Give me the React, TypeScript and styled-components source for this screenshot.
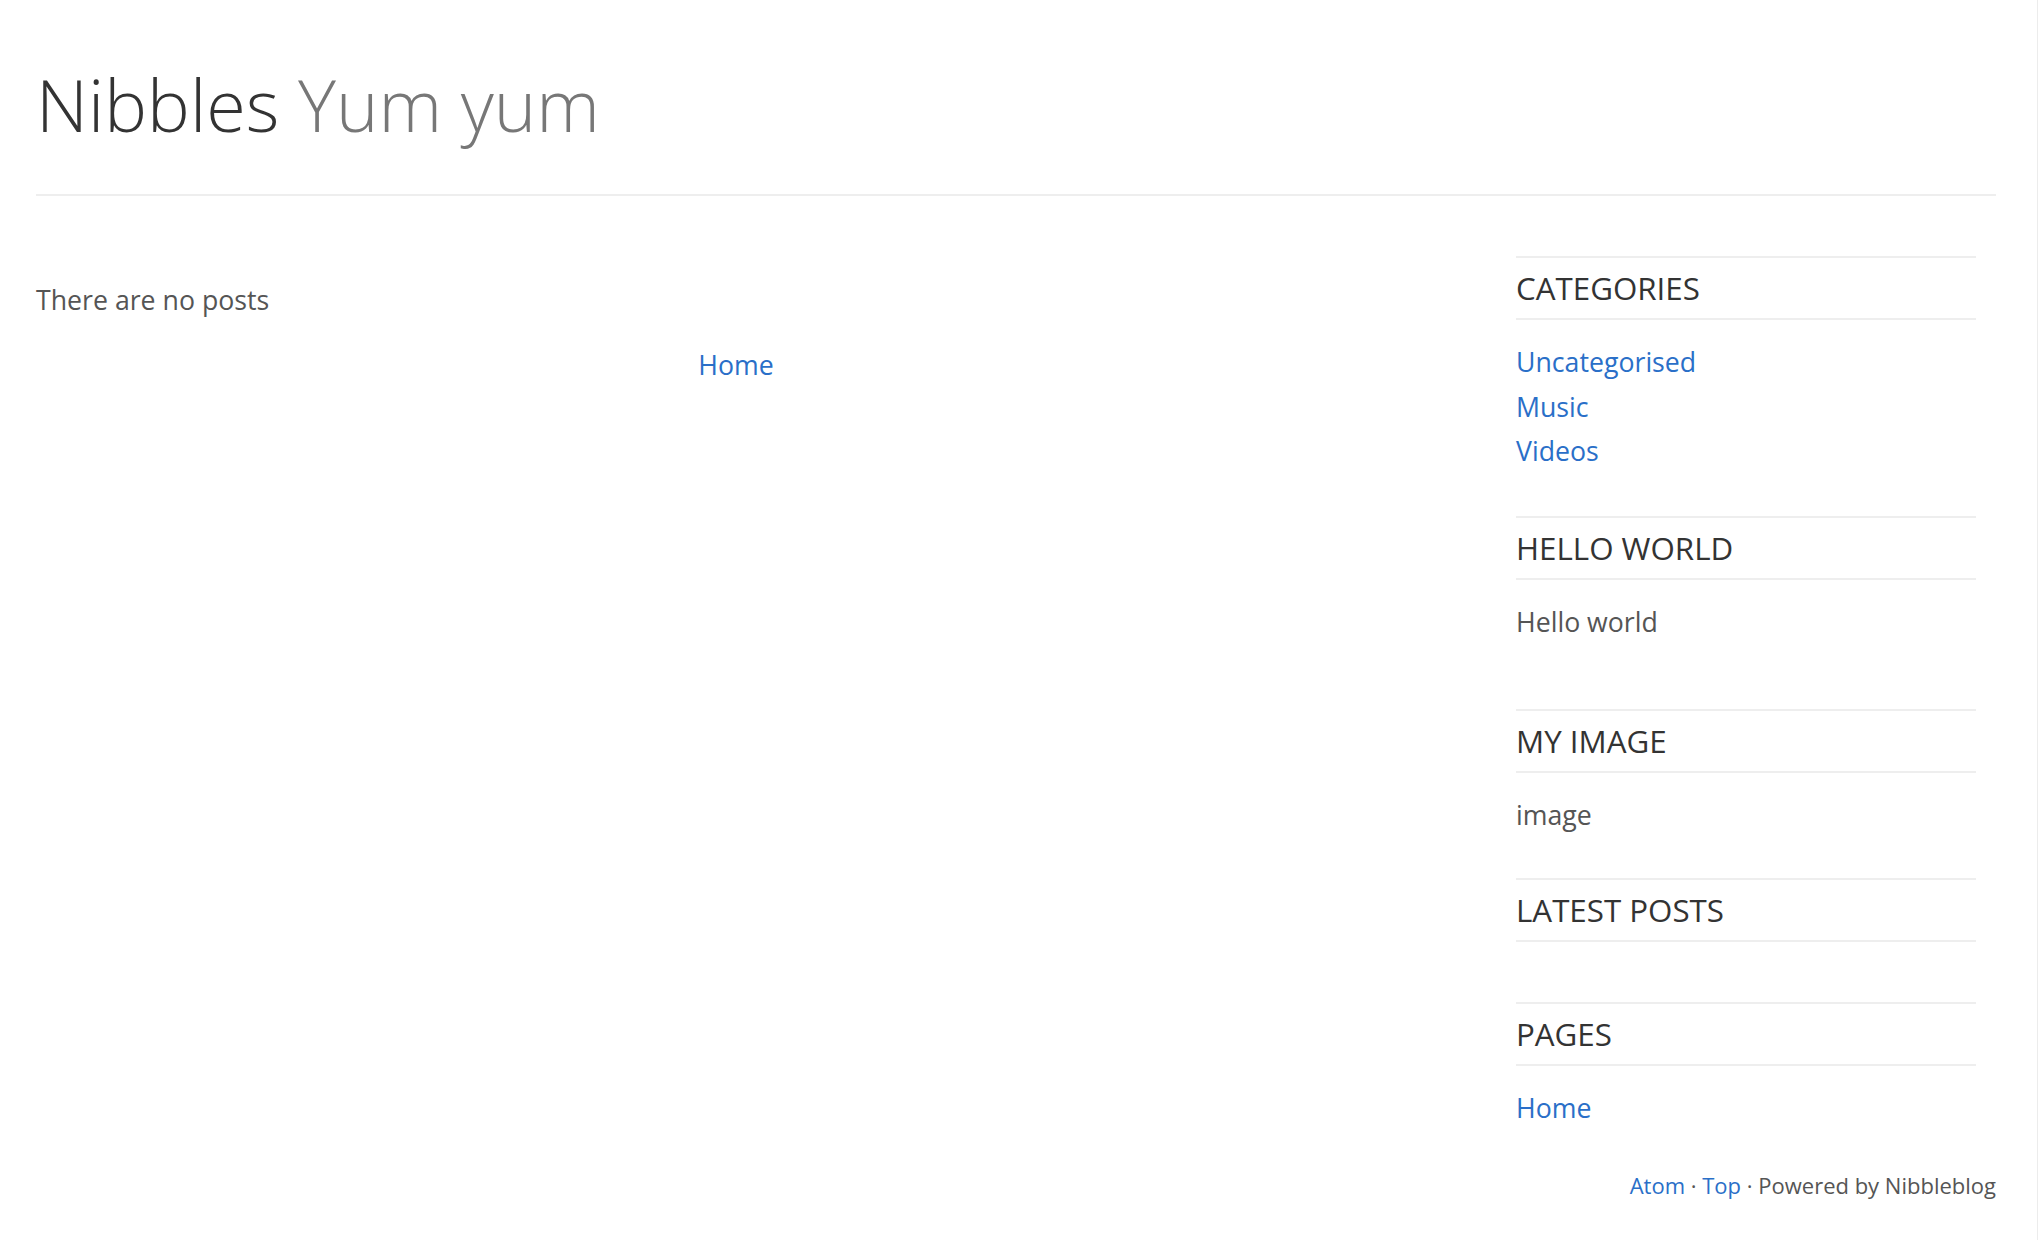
import React from "react";
import styled, { createGlobalStyle } from "styled-components";

const GlobalStyle = createGlobalStyle`
  html, body {
    margin: 0;
    padding: 0;
    background: #ffffff;
  }
  body {
    font-family: "Open Sans", "Noto Sans", "Liberation Sans", sans-serif;
    color: #555555;
  }
  * { box-sizing: border-box; }
`;

const Page = styled.div`
  min-height: 100vh;
  padding: 0 41px 0 36px;
  border-right: 1px solid #ececec;
`;

const Header = styled.header`
  padding: 60px 0 46px;
  border-bottom: 2px solid #eeeeee;
`;

const Title = styled.h1`
  margin: 0;
  font-family: "Open Sans", sans-serif;
  font-weight: 300;
  font-size: 72px;
  line-height: 88px;
  color: #333333;
`;

const Slogan = styled.span`
  color: #777777;
`;

const Body = styled.div`
  display: flex;
  align-items: flex-start;
  gap: 80px;
  padding-top: 60px;
`;

const Main = styled.main`
  width: 1400px;
  flex: none;
  padding-top: 22px;
`;

const Note = styled.p`
  margin: 0 0 20px;
  font-size: 26.7px;
  line-height: 44.5px;
  color: #555555;
`;

const Pager = styled.nav`
  text-align: center;
  font-size: 26.7px;
  line-height: 44.5px;
`;

const Link = styled.a`
  color: #2a6fc8;
  text-decoration: none;
`;

const Sidebar = styled.aside`
  flex: 1;
  padding-right: 20px;
`;

const Section = styled.section<{ $gap?: number }>`
  margin-bottom: ${(p) => p.$gap ?? 40}px;
`;

const SectionTitle = styled.h3`
  margin: 0;
  padding: 10px 0;
  font-size: 31.3px;
  font-weight: 400;
  line-height: 40px;
  color: #333333;
  border-top: 2px solid #eeeeee;
  border-bottom: 2px solid #eeeeee;
`;

const SectionBody = styled.div`
  padding-top: 20px;
  font-size: 26.7px;
  line-height: 44.5px;
  color: #555555;
`;

const List = styled.ul`
  list-style: none;
  margin: 0;
  padding: 0;
`;

const Item = styled.li`
  margin: 0;
`;

const Text = styled.p<{ $after?: number }>`
  margin: 0;
  padding-bottom: ${(p) => p.$after ?? 0}px;
`;

const Footer = styled.footer`
  padding-top: 38px;
  text-align: right;
  font-size: 22px;
  line-height: 35px;
  color: #555555;
`;

export default function App() {
  return (
    <>
      <GlobalStyle />
      <Page>
        <Header>
          <Title>
            Nibbles <Slogan>Yum yum</Slogan>
          </Title>
        </Header>
        <Body>
          <Main>
            <Note>There are no posts</Note>
            <Pager>
              <Link href="#">Home</Link>
            </Pager>
          </Main>
          <Sidebar>
            <Section $gap={42}>
              <SectionTitle>CATEGORIES</SectionTitle>
              <SectionBody>
                <List>
                  <Item><Link href="#">Uncategorised</Link></Item>
                  <Item><Link href="#">Music</Link></Item>
                  <Item><Link href="#">Videos</Link></Item>
                </List>
              </SectionBody>
            </Section>
            <Section>
              <SectionTitle>HELLO WORLD</SectionTitle>
              <SectionBody>
                <Text $after={25}>Hello world</Text>
              </SectionBody>
            </Section>
            <Section>
              <SectionTitle>MY IMAGE</SectionTitle>
              <SectionBody>
                <Text>image</Text>
              </SectionBody>
            </Section>
            <Section>
              <SectionTitle>LATEST POSTS</SectionTitle>
              <SectionBody>
                <List />
              </SectionBody>
            </Section>
            <Section $gap={0}>
              <SectionTitle>PAGES</SectionTitle>
              <SectionBody>
                <List>
                  <Item><Link href="#">Home</Link></Item>
                </List>
              </SectionBody>
            </Section>
          </Sidebar>
        </Body>
        <Footer>
          <Link href="#">Atom</Link> · <Link href="#">Top</Link> · Powered by Nibbleblog
        </Footer>
      </Page>
    </>
  );
}
